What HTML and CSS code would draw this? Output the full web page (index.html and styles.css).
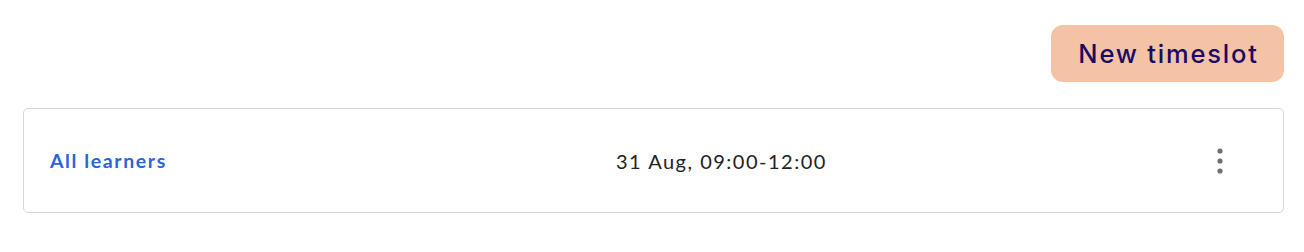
FILE: index.html
```html
<!DOCTYPE html>
<html lang="en">
<head>
<meta charset="utf-8">
<title>Timeslots</title>
<link rel="stylesheet" href="styles.css">
</head>
<body>
<div class="page">
  <div class="toolbar">
    <button class="btn-new" type="button">New timeslot</button>
  </div>
  <div class="slot-card">
    <a class="slot-group" href="#">All learners</a>
    <span class="slot-time">31 Aug, 09:00-12:00</span>
    <button class="slot-menu" type="button" aria-label="More options">
      <svg width="6" height="26" viewBox="0 0 6 26" aria-hidden="true">
        <circle cx="3" cy="3" r="2.6" fill="#6c6f76"/>
        <circle cx="3" cy="13" r="2.6" fill="#6c6f76"/>
        <circle cx="3" cy="23" r="2.6" fill="#6c6f76"/>
      </svg>
    </button>
  </div>
</div>
</body>
</html>
```

FILE: styles.css
```css
html, body {
  margin: 0;
  padding: 0;
  background: #ffffff;
}

.page {
  padding: 25px 20px 0 23px;
  font-family: "Lato", "Open Sans", sans-serif;
}

.toolbar {
  display: flex;
  justify-content: flex-end;
}

.btn-new {
  width: 233px;
  height: 57px;
  border: none;
  border-radius: 12px;
  background: #f4c3a5;
  color: #1b0a66;
  font-family: "Inter", "Roboto", sans-serif;
  font-size: 25.5px;
  font-weight: 500;
  letter-spacing: 1.8px;
  cursor: pointer;
  padding: 0 0 0 2px;
}

.slot-card {
  margin-top: 26px;
  height: 105px;
  box-sizing: border-box;
  border: 1px solid #d6d6d6;
  border-radius: 5px;
  display: flex;
  align-items: center;
  padding: 0 48px 0 26px;
}

.slot-group {
  width: 566px;
  flex: none;
  color: #2b63d9;
  text-decoration: none;
  font-size: 19.5px;
  font-weight: 700;
  letter-spacing: 1.6px;
}

.slot-time {
  flex: 1;
  color: #222222;
  font-size: 20px;
  letter-spacing: 1.5px;
}

.slot-menu {
  flex: none;
  border: none;
  background: transparent;
  padding: 0;
  width: 30px;
  height: 30px;
  display: flex;
  align-items: center;
  justify-content: center;
  cursor: pointer;
}
```
